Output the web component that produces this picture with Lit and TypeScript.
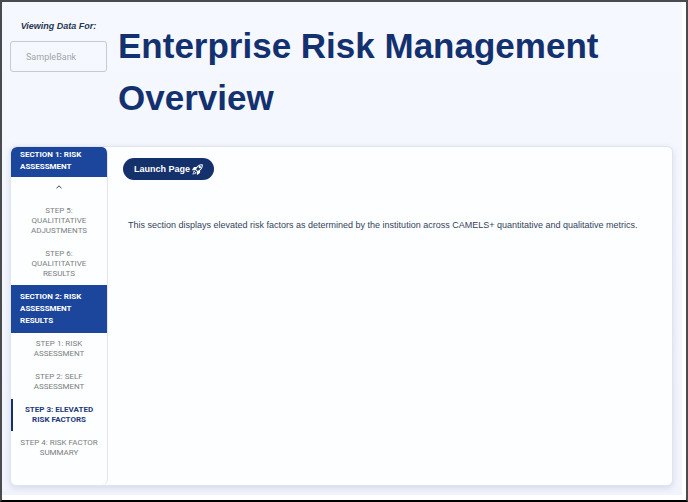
import { LitElement, html, css } from "lit";
import { customElement, state } from "lit/decorators.js";
import { classMap } from "lit/directives/class-map.js";

interface Section {
  title: string;
  steps: string[];
}

const sections: Section[] = [
  {
    title: "Section 1: Risk Assessment",
    steps: ["Step 5: Qualititative Adjustments", "Step 6: Qualititative Results"],
  },
  {
    title: "Section 2: Risk Assessment Results",
    steps: [
      "Step 1: Risk Assessment",
      "Step 2: Self Assessment",
      "Step 3: Elevated Risk Factors",
      "Step 4: Risk Factor Summary",
    ],
  },
];

@customElement("step-nav")
export class StepNav extends LitElement {
  @state() private current = "Step 3: Elevated Risk Factors";

  static styles = css`
    :host {
      display: block;
      box-sizing: border-box;
      font: 8px/10px Roboto, sans-serif;
      text-transform: uppercase;
      border-right: 1px solid #e3e5ec;
      border-radius: 6px;
      overflow: hidden;
      background: #fdfeff;
    }
    .heading {
      margin: 0;
      padding: 6px 24px 6px 9px;
      font-size: 8px;
      line-height: 12px;
      font-weight: 700;
      color: #fff;
      background: #1b469b;
    }
    .first {
      padding-top: 2px;
      padding-bottom: 4px;
    }
    .up {
      display: flex;
      width: 100%;
      height: 23px;
      padding: 0 0 3px;
      border: 0;
      background: none;
      align-items: center;
      justify-content: center;
      cursor: pointer;
    }
    .steps {
      display: grid;
      gap: 1px;
      margin: 0;
      padding: 0;
      list-style: none;
    }
    .step {
      display: block;
      padding: 6px 8px 6px 6px;
      border-left: 2px solid transparent;
      text-align: center;
      text-decoration: none;
      color: #7b7e82;
    }
    .label {
      display: block;
      max-width: 80px;
      margin: 0 auto;
    }
    .active {
      color: #1c3a78;
      font-weight: 700;
      border-left-color: #14316d;
    }
  `;

  private select(e: Event, step: string) {
    e.preventDefault();
    this.current = step;
  }

  render() {
    return html`<nav aria-label="Steps">
      ${sections.map(
        (s, i) => html`
          <h2 class=${classMap({ heading: true, first: i === 0 })}>${s.title}</h2>
          ${i === 0
            ? html`<button class="up" aria-label="Scroll up">
                <svg width="6" height="4" viewBox="0 0 6 4" fill="none" stroke="#34465c">
                  <path d="M.5 3.4 3 .8l2.500 2.600" />
                </svg>
              </button>`
            : ""}
          <ul class="steps">
            ${s.steps.map(
              (step) => html`<li>
                <a
                  href="#"
                  class=${classMap({ step: true, active: step === this.current })}
                  @click=${(e: Event) => this.select(e, step)}
                  ><span class="label">${step}</span></a
                >
              </li>`
            )}
          </ul>
        `
      )}
    </nav>`;
  }
}

@customElement("app-root")
export class AppRoot extends LitElement {
  static styles = css`
    :host {
      display: flex;
      flex-direction: column;
      box-sizing: border-box;
      min-height: 100vh;
      border: 2px solid #4a4b4e;
      border-top-color: #4a4b4e;
      border-bottom-color: #000;
      background: #fff;
      padding: 0 4px 5px 0;
      font-family: "Liberation Sans", Arial, sans-serif;
    }
    .page {
      flex: 1;
      display: flex;
      flex-direction: column;
      padding: 18px 9px 9px 8px;
      background: linear-gradient(#f6f8ff, #f1f4fd);
    }
    .top {
      display: grid;
      grid-template-columns: 97px 1fr;
      column-gap: 11px;
      align-items: start;
      margin-bottom: 22px;
    }
    .field {
      display: grid;
      gap: 9px;
    }
    .caption {
      font: italic 700 9px/12px "Liberation Sans", Arial, sans-serif;
      color: #26374f;
      text-align: center;
    }
    .bank {
      box-sizing: border-box;
      width: 100%;
      height: 31px;
      padding: 0 15px;
      border: 1px solid #c8cad0;
      border-radius: 3px;
      background: transparent;
      font: 9px/12px Roboto, sans-serif;
      color: #a3a6ac;
    }
    .title {
      margin: 0;
      font-size: 35px;
      line-height: 52px;
      font-weight: 700;
      color: #14316f;
    }
    .panel {
      flex: 1;
      display: grid;
      grid-template-columns: 97px 1fr;
      border-radius: 6px;
      background: #fdfeff;
      border: 1px solid #e1e4ec;
      box-shadow: 0 2px 6px rgba(40, 50, 90, 0.14);
      overflow: hidden;
    }
    .content {
      padding: 11px 15px;
    }
    .launch {
      display: inline-flex;
      align-items: center;
      gap: 2px;
      height: 22px;
      padding: 0 11px;
      border: 0;
      border-radius: 11px;
      background: #14316c;
      color: #fff;
      font: 700 9px/12px "Liberation Sans", Arial, sans-serif;
      cursor: pointer;
    }
    .text {
      margin: 38px 0 0 5px;
      font-size: 9px;
      line-height: 14px;
      color: #34435a;
    }
  `;

  render() {
    return html`
      <main class="page">
        <header class="top">
          <div class="field">
            <label class="caption" for="bank">Viewing Data For:</label>
            <input class="bank" id="bank" value="SampleBank" disabled />
          </div>
          <h1 class="title">Enterprise Risk Management Overview</h1>
        </header>
        <section class="panel">
          <step-nav></step-nav>
          <div class="content">
            <button class="launch">
              Launch Page
              <svg
                width="11"
                height="11"
                viewBox="0 0 24 24"
                fill="none"
                stroke="#fff"
                stroke-width="2.200"
                stroke-linejoin="round"
                stroke-linecap="round"
              >
                <path d="M22.500 1.500C16 1 12 3.500 7.500 11.500l5 5C20.500 12 23 8 22.500 1.500z" />
                <path d="M10 7.500H5L1.500 12.500l6-.5M16.500 14v5l-5 3.500.5-6" fill="#fff" />
                <circle cx="17" cy="7" r="1.400" fill="#fff" />
                <path d="M5.500 15.500l-2.500 2.500M8.500 18.500l-2.500 2.500M2 22l1-1" />
              </svg>
            </button>
            <p class="text">
              This section displays elevated risk factors as determined by the institution across
              CAMELS+ quantitative and qualitative metrics.
            </p>
          </div>
        </section>
      </main>
    `;
  }
}
